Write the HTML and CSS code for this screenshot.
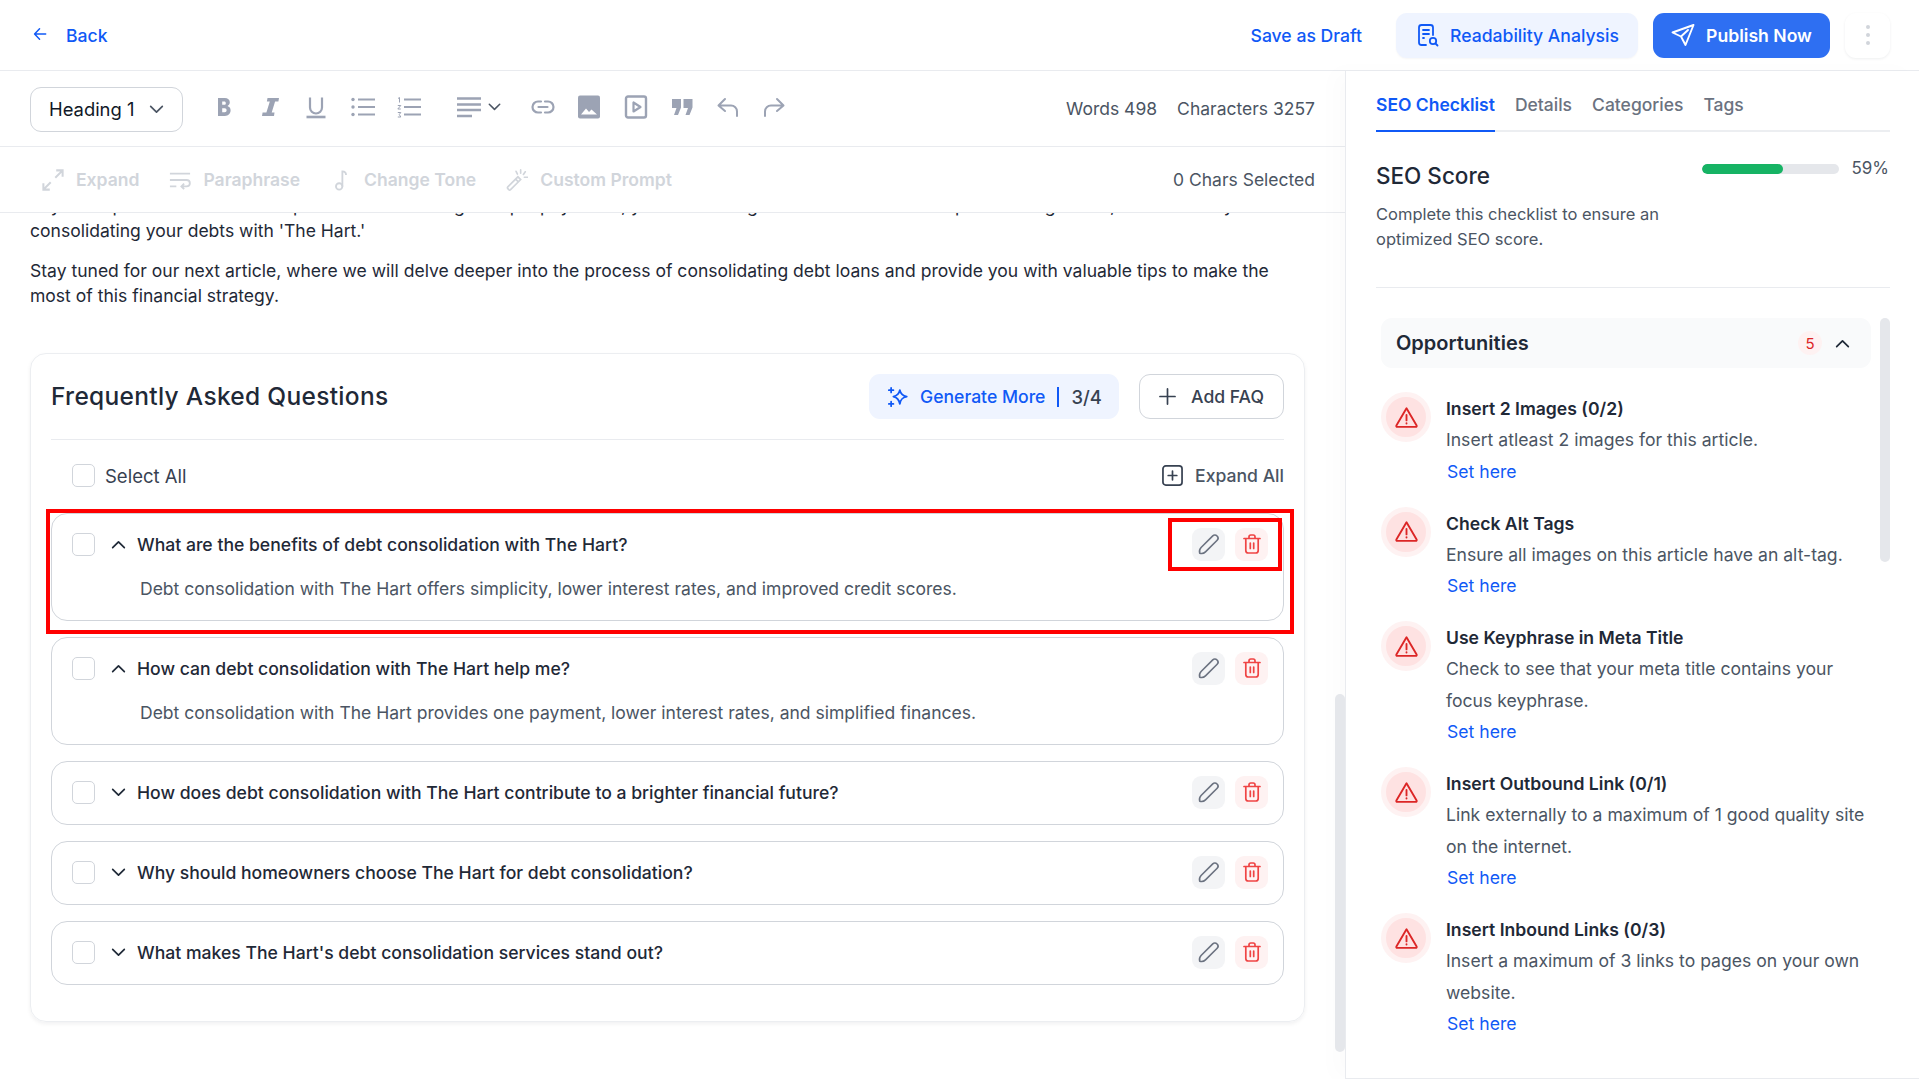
FILE: index.html
```html
<!DOCTYPE html>
<html lang="en">
<head>
<meta charset="utf-8">
<title>Editor</title>
<link rel="stylesheet" href="styles.css">
</head>
<body>
<svg class="defs" width="0" height="0" aria-hidden="true">
  <defs>
    <symbol id="i-up" viewBox="0 0 16 10"><path d="M1.5 8.5 8 2l6.5 6.5" fill="none" stroke="currentColor" stroke-width="1.9" stroke-linecap="round" stroke-linejoin="round"/></symbol>
    <symbol id="i-down" viewBox="0 0 16 10"><path d="M1.5 1.5 8 8l6.5-6.5" fill="none" stroke="currentColor" stroke-width="1.9" stroke-linecap="round" stroke-linejoin="round"/></symbol>
    <symbol id="i-edit" viewBox="0 0 24 24"><path d="M4.2 19.8c-.6-2.2-.2-3.7 1.2-5.1L15.8 4.3c1-1 2.7-1 3.8.1s1.1 2.8.1 3.8L9.3 18.6c-1.400 1.400-2.900 1.800-5.100 1.200Z" fill="none" stroke="currentColor" stroke-width="1.400" stroke-linejoin="round"/></symbol>
    <symbol id="i-trash" viewBox="0 0 24 24"><path d="M4 6.500h16M9 6.500V4.800C9 3.800 9.800 3 10.800 3h2.400c1 0 1.800.8 1.800 1.800v1.700M5.800 6.500v12c0 1.400 1.100 2.500 2.500 2.500h7.400c1.400 0 2.500-1.100 2.500-2.500v-12M10.300 11v5.500M13.700 11v5.500" fill="none" stroke="currentColor" stroke-width="1.700" stroke-linecap="round" stroke-linejoin="round"/></symbol>
    <symbol id="i-warn" viewBox="0 0 24 24"><path d="M12 3.200 2.300 19.600c-.4.700.1 1.400.8 1.400h17.800c.7 0 1.200-.7.800-1.400L12 3.200Z" fill="none" stroke="currentColor" stroke-width="1.800" stroke-linejoin="round"/><path d="M12 9.500v5.300M12 17.400v.4" fill="none" stroke="currentColor" stroke-width="1.800" stroke-linecap="round"/></symbol>
  </defs>
</svg>
<div class="app">
  <header class="topbar">
    <a class="back">
      <svg class="back-icon" viewBox="0 0 16 16"><path d="M14.500 8H2M7.500 2 1.800 8l5.700 6" fill="none" stroke="currentColor" stroke-width="1.700" stroke-linecap="round" stroke-linejoin="round"/></svg>
      <span>Back</span>
    </a>
    <div class="top-actions">
      <a class="draft">Save as Draft</a>
      <button class="btn-soft">
        <svg class="btn-icon" viewBox="0 0 24 24"><path d="M11 22H6.500A2.500 2.500 0 0 1 4 19.500v-15A2.500 2.500 0 0 1 6.500 2h9A2.500 2.500 0 0 1 18 4.500V12M8 7h6M8 11h6M8 15h1" fill="none" stroke="currentColor" stroke-width="1.800" stroke-linecap="round"/><circle cx="18" cy="18" r="3.200" fill="none" stroke="currentColor" stroke-width="1.800"/><path d="m20.500 20.500 2 2" stroke="currentColor" stroke-width="1.800" stroke-linecap="round"/></svg>
        Readability Analysis
      </button>
      <button class="btn-primary">
        <svg class="btn-icon" viewBox="0 0 24 24"><path d="M22.500 2 1.500 9.500l8.500 4 4.500 8.500L22.500 2ZM10 13.500 17 7" fill="none" stroke="currentColor" stroke-width="1.900" stroke-linecap="round" stroke-linejoin="round"/></svg>
        Publish Now
      </button>
      <button class="btn-more" aria-label="More"><i></i><i></i><i></i></button>
    </div>
  </header>

  <div class="workspace">
    <main class="editor">
      <div class="toolbar">
        <div class="format-select"><span>Heading 1</span>
          <svg class="sel-chev" viewBox="0 0 16 10"><use href="#i-down"/></svg>
        </div>
        <div class="tools">
          <svg class="tool" viewBox="0 0 24 24"><path d="M6 3h6.800c3 0 5 1.700 5 4.300 0 1.700-.9 3-2.300 3.700 1.900.6 3.100 2.200 3.100 4.300 0 3.200-2.300 5.700-5.700 5.700H6V3Zm4.200 3.600v3.200h2.100c1 0 1.500-.7 1.500-1.600s-.6-1.600-1.500-1.600h-2.100Zm0 6.700v3.900h2.500c1.200 0 1.900-.9 1.900-2s-.7-1.900-1.900-1.900h-2.500Z" fill="currentColor"/></svg>
          <svg class="tool" viewBox="0 0 24 24"><path d="M9.500 3H21l-.6 3.400h-3.300l-3.400 11.200h2.800L16 21H4l.6-3.400h3.800l3.400-11.200H8.900L9.500 3Z" fill="currentColor"/></svg>
          <svg class="tool" viewBox="0 0 24 24"><path d="M6 2.500v10a6 6 0 0 0 12 0v-10" fill="none" stroke="currentColor" stroke-width="2.200"/><path d="M2.500 22h19" stroke="currentColor" stroke-width="2.600"/></svg>
          <svg class="tool" viewBox="0 0 24 24"><path d="M7 4.500h17M7 12h17M7 19.500h17" stroke="currentColor" stroke-width="2.200"/><circle cx="2" cy="4.500" r="1.700" fill="currentColor"/><circle cx="2" cy="12" r="1.700" fill="currentColor"/><circle cx="2" cy="19.500" r="1.700" fill="currentColor"/></svg>
          <svg class="tool" viewBox="0 0 24 24"><path d="M7 4.500h17M7 12h17M7 19.500h17" stroke="currentColor" stroke-width="2.200"/><path d="M1 3.500 2.500 2.500v5M.8 10.500h3l-3 3.500h3M.8 17.500h3l-1.500 2 1.500 2.500h-3" fill="none" stroke="currentColor" stroke-width="1"/></svg>
          <div class="tool-group">
            <svg class="tool" viewBox="0 0 24 24"><path d="M0 3.500h24M0 9.500h24M0 15h24M0 21h15" stroke="currentColor" stroke-width="2.400"/></svg>
            <svg class="tool-chev" viewBox="0 0 16 10"><use href="#i-down"/></svg>
          </div>
          <svg class="tool" viewBox="0 0 24 24"><path d="M10 6.500H7a5.500 5.500 0 0 0 0 11h3M14 6.500h3a5.500 5.500 0 0 1 0 11h-3M7.500 12h9" fill="none" stroke="currentColor" stroke-width="2.200" stroke-linecap="round"/></svg>
          <svg class="tool" viewBox="0 0 24 24"><rect x="1" y="0.500" width="22" height="23" rx="2" fill="currentColor"/><path d="m4 19.500 5-6 3 3.500 2.500-2.500 5.500 5Z" fill="#fff"/></svg>
          <svg class="tool" viewBox="0 0 24 24"><rect x="2" y="1.500" width="20" height="21" rx="2" fill="none" stroke="currentColor" stroke-width="2.400"/><path d="M9.500 7.500v9l7-4.500Z" fill="none" stroke="currentColor" stroke-width="2.200" stroke-linejoin="round"/></svg>
          <svg class="tool" viewBox="0 0 24 24"><path d="M2 4h9v8.500L8 20H4l2.500-7H2V4Zm11.500 0h9v8.500l-3 7.500h-4l2.500-7h-4.500V4Z" fill="currentColor"/></svg>
          <svg class="tool" viewBox="0 0 24 24"><path d="M9 4 2.500 10.500 9 16M3 10.500h12a6 6 0 0 1 6 6V21" fill="none" stroke="currentColor" stroke-width="2" stroke-linecap="round" stroke-linejoin="round"/></svg>
          <svg class="tool" viewBox="0 0 24 24"><path d="m15 4 6.500 6.500L15 16M21 10.500H9a6 6 0 0 0-6 6V21" fill="none" stroke="currentColor" stroke-width="2" stroke-linecap="round" stroke-linejoin="round"/></svg>
        </div>
        <div class="counts"><span>Words 498</span><span>Characters 3257</span></div>
      </div>

      <div class="aibar">
        <div class="ai-tools">
          <span class="ai-tool">
            <svg class="ai-icon" viewBox="0 0 24 24"><path d="M14.500 9.500 22.500 1.500M15.500 1.500h7v7M9.500 14.500l-8 8M1.500 15.500v7h7" fill="none" stroke="currentColor" stroke-width="2.200"/></svg>Expand</span>
          <span class="ai-tool">
            <svg class="ai-icon" viewBox="0 0 24 24"><path d="M1 5h22M1 12h18c5 0 5 7 0 7h-5m2.500-3L13.500 19l3 3M1 19h7" fill="none" stroke="currentColor" stroke-width="2"/></svg>Paraphrase</span>
          <span class="ai-tool">
            <svg class="ai-icon" viewBox="0 0 24 24"><circle cx="10" cy="19" r="3.500" fill="none" stroke="currentColor" stroke-width="2"/><path d="M13.500 19V2.500c2 0 4 1 4 4" fill="none" stroke="currentColor" stroke-width="2"/></svg>Change Tone</span>
          <span class="ai-tool">
            <svg class="ai-icon" viewBox="0 0 24 24"><path d="M2 19.500 13 8.500l3 3L5 22.500a1.500 1.500 0 0 1-2 0l-1-1a1.500 1.500 0 0 1 0-2ZM10.500 11l3 3M16 1v3.500M21 3l-2 3M23.500 9H20M11 2.500l1.500 3" fill="none" stroke="currentColor" stroke-width="1.800" stroke-linecap="round"/></svg>Custom Prompt</span>
        </div>
        <span class="selected">0 Chars Selected</span>
      </div>

      <div class="doc">
        <div class="doc-scroll">
          <p class="para clip-first">Say no to pressure and the complex task of handling multiple payments, you can manage all of the debt in a simple and single loan, all made easy when<br>consolidating your debts with 'The Hart.'</p>
          <p class="para">Stay tuned for our next article, where we will delve deeper into the process of consolidating debt loans and provide you with valuable tips to make the most of this financial strategy.</p>

          <section class="faq-card">
            <div class="faq-head">
              <h2>Frequently Asked Questions</h2>
              <div class="faq-head-actions">
                <button class="btn-generate">
                  <svg class="gen-icon" viewBox="0 0 24 24"><path d="M14 4.500c.8 4 2.500 6 7.500 7-5 1-6.700 3-7.500 8-.8-5-3-7-7-8 4-1 6.200-3 7-7Z" fill="none" stroke="currentColor" stroke-width="2" stroke-linejoin="round"/><path d="M4.500 2v5M2 4.500h5M4.500 17v5M2 19.500h5" stroke="currentColor" stroke-width="1.900" stroke-linecap="round"/></svg>
                  <span>Generate More</span><i class="gen-sep"></i><b class="gen-count">3/4</b>
                </button>
                <button class="btn-outline">
                  <svg class="plus" viewBox="0 0 18 18"><path d="M9 1v16M1 9h16" stroke="currentColor" stroke-width="1.800" stroke-linecap="round"/></svg>
                  Add FAQ
                </button>
              </div>
            </div>
            <div class="select-row">
              <label class="select-all"><span class="check"></span>Select All</label>
              <a class="expand-all">
                <svg class="expand-icon" viewBox="0 0 22 22"><rect x="1" y="1" width="20" height="20" rx="3" fill="none" stroke="currentColor" stroke-width="1.800"/><path d="M11 6.500v9M6.500 11h9" stroke="currentColor" stroke-width="1.800" stroke-linecap="round"/></svg>
                Expand All
              </a>
            </div>
            <div class="faq-list">
              <article class="faq-item">
                <span class="mark mark-row"></span>
                <span class="mark mark-actions"></span>
                <div class="faq-row">
                  <span class="check"></span>
                  <svg class="chev" viewBox="0 0 16 10"><use href="#i-up"/></svg>
                  <span class="q">What are the benefits of debt consolidation with The Hart?</span>
                  <div class="row-actions">
                    <button class="act act-edit"><svg class="edit-icon" viewBox="0 0 24 24"><use href="#i-edit"/></svg></button>
                    <button class="act act-del"><svg class="act-icon" viewBox="0 0 24 24"><use href="#i-trash"/></svg></button>
                  </div>
                </div>
                <p class="answer">Debt consolidation with The Hart offers simplicity, lower interest rates, and improved credit scores.</p>
              </article>
              <article class="faq-item">
                <div class="faq-row">
                  <span class="check"></span>
                  <svg class="chev" viewBox="0 0 16 10"><use href="#i-up"/></svg>
                  <span class="q">How can debt consolidation with The Hart help me?</span>
                  <div class="row-actions">
                    <button class="act act-edit"><svg class="edit-icon" viewBox="0 0 24 24"><use href="#i-edit"/></svg></button>
                    <button class="act act-del"><svg class="act-icon" viewBox="0 0 24 24"><use href="#i-trash"/></svg></button>
                  </div>
                </div>
                <p class="answer">Debt consolidation with The Hart provides one payment, lower interest rates, and simplified finances.</p>
              </article>
              <article class="faq-item">
                <div class="faq-row">
                  <span class="check"></span>
                  <svg class="chev" viewBox="0 0 16 10"><use href="#i-down"/></svg>
                  <span class="q">How does debt consolidation with The Hart contribute to a brighter financial future?</span>
                  <div class="row-actions">
                    <button class="act act-edit"><svg class="edit-icon" viewBox="0 0 24 24"><use href="#i-edit"/></svg></button>
                    <button class="act act-del"><svg class="act-icon" viewBox="0 0 24 24"><use href="#i-trash"/></svg></button>
                  </div>
                </div>
              </article>
              <article class="faq-item">
                <div class="faq-row">
                  <span class="check"></span>
                  <svg class="chev" viewBox="0 0 16 10"><use href="#i-down"/></svg>
                  <span class="q">Why should homeowners choose The Hart for debt consolidation?</span>
                  <div class="row-actions">
                    <button class="act act-edit"><svg class="edit-icon" viewBox="0 0 24 24"><use href="#i-edit"/></svg></button>
                    <button class="act act-del"><svg class="act-icon" viewBox="0 0 24 24"><use href="#i-trash"/></svg></button>
                  </div>
                </div>
              </article>
              <article class="faq-item">
                <div class="faq-row">
                  <span class="check"></span>
                  <svg class="chev" viewBox="0 0 16 10"><use href="#i-down"/></svg>
                  <span class="q">What makes The Hart's debt consolidation services stand out?</span>
                  <div class="row-actions">
                    <button class="act act-edit"><svg class="edit-icon" viewBox="0 0 24 24"><use href="#i-edit"/></svg></button>
                    <button class="act act-del"><svg class="act-icon" viewBox="0 0 24 24"><use href="#i-trash"/></svg></button>
                  </div>
                </div>
              </article>
            </div>
          </section>
        </div>
        <div class="doc-thumb"></div>
      </div>
    </main>

    <aside class="sidebar">
      <nav class="tabs">
        <a class="tab tab-active">SEO Checklist</a>
        <a class="tab">Details</a>
        <a class="tab">Categories</a>
        <a class="tab">Tags</a>
      </nav>
      <section class="score">
        <div class="score-text">
          <h3>SEO Score</h3>
          <p>Complete this checklist to ensure an optimized SEO score.</p>
        </div>
        <div class="score-meter">
          <div class="meter"><div class="meter-fill"></div></div>
          <span class="meter-val">59%</span>
        </div>
      </section>
      <div class="checklist">
        <div class="opp-head">
          <h4>Opportunities</h4>
          <span class="opp-badge">5</span>
          <svg class="opp-chev" viewBox="0 0 16 10"><use href="#i-up"/></svg>
        </div>
        <div class="opp-item">
          <span class="warn"><svg class="warn-icon" viewBox="0 0 24 24"><use href="#i-warn"/></svg></span>
          <div class="opp-body"><h5>Insert 2 Images (0/2)</h5><p>Insert atleast 2 images for this article.</p><a>Set here</a></div>
        </div>
        <div class="opp-item">
          <span class="warn"><svg class="warn-icon" viewBox="0 0 24 24"><use href="#i-warn"/></svg></span>
          <div class="opp-body"><h5>Check Alt Tags</h5><p>Ensure all images on this article have an alt-tag.</p><a>Set here</a></div>
        </div>
        <div class="opp-item">
          <span class="warn"><svg class="warn-icon" viewBox="0 0 24 24"><use href="#i-warn"/></svg></span>
          <div class="opp-body"><h5>Use Keyphrase in Meta Title</h5><p>Check to see that your meta title contains your focus keyphrase.</p><a>Set here</a></div>
        </div>
        <div class="opp-item">
          <span class="warn"><svg class="warn-icon" viewBox="0 0 24 24"><use href="#i-warn"/></svg></span>
          <div class="opp-body"><h5>Insert Outbound Link (0/1)</h5><p>Link externally to a maximum of 1 good quality site on the internet.</p><a>Set here</a></div>
        </div>
        <div class="opp-item">
          <span class="warn"><svg class="warn-icon" viewBox="0 0 24 24"><use href="#i-warn"/></svg></span>
          <div class="opp-body"><h5>Insert Inbound Links (0/3)</h5><p>Insert a maximum of 3 links to pages on your own website.</p><a>Set here</a></div>
        </div>
        <div class="side-thumb"></div>
      </div>
    </aside>
  </div>
</div>
</body>
</html>
```

FILE: styles.css
```css
* { box-sizing: border-box; }
html, body { margin: 0; height: 100%; }
body { font-family: Inter, "Liberation Sans", sans-serif; color: #111827; background: #fff; overflow: hidden; }
button { font: inherit; border: 0; cursor: pointer; }
h2, h3, h4, h5, p { margin: 0; }
.defs { position: absolute; }

.app { height: 1079px; display: flex; flex-direction: column; overflow: hidden; }

/* top bar */
.topbar { height: 71px; flex: none; display: flex; align-items: center; justify-content: space-between; padding: 0 29px 0 33px; border-bottom: 1px solid #e9ebef; }
.back { display: flex; align-items: center; gap: 19px; color: #1059f6; font-size: 17.600px; font-weight: 500; padding-top: 1px; }
.back-icon { width: 14px; height: 14px; margin-top: -3px; }
.top-actions { display: flex; align-items: center; }
.draft { color: #1059f6; font-size: 17.600px; font-weight: 500; margin-right: 34px; padding-top: 1px; }
.btn-soft, .btn-primary { height: 45px; display: flex; align-items: center; justify-content: center; gap: 11px; border-radius: 11px; font-size: 17.600px; font-weight: 500; }
.btn-soft { width: 242px; background: #eff4ff; color: #1059f6; margin-right: 15px; box-shadow: 0 1px 2px rgba(16,24,40,.04); }
.btn-primary { width: 177px; background: #2e6ff2; color: #fff; font-weight: 600; margin-right: 15px; }
.btn-icon { width: 24px; height: 24px; }
.btn-more { width: 45px; height: 45px; border-radius: 11px; background: #fff; box-shadow: 0 1px 3px rgba(16,24,40,.07); display: flex; flex-direction: column; align-items: center; justify-content: center; gap: 4px; }
.btn-more i { width: 4px; height: 4px; border-radius: 50%; background: #d1d5db; }

.workspace { flex: 1; display: flex; min-height: 0; }

/* editor */
.editor { width: 1345px; flex: none; display: flex; flex-direction: column; min-height: 0; }
.toolbar { height: 76px; flex: none; display: flex; align-items: center; padding: 0 30px; border-bottom: 1px solid #e9ebef; }
.format-select { width: 153px; height: 45px; margin-top: 1px; flex: none; border: 1px solid #d1d5db; border-radius: 11px; display: flex; align-items: center; justify-content: space-between; padding: 0 18px; font-size: 18.400px; }
.sel-chev { width: 15px; height: 9px; color: #4b5563; }
.tools { display: flex; align-items: center; gap: 22.200px; margin-left: 29px; margin-top: -4px; }
.tool { width: 24px; height: 24px; color: #9ca3b4; flex: none; }
.tool-group { display: flex; align-items: center; gap: 7px; margin: 0 8px 0 14px; }
.tool-chev { width: 13px; height: 8px; color: #4b5563; }
.counts { margin-left: auto; display: flex; gap: 20px; font-size: 17.500px; color: #4b5563; white-space: nowrap; }

.aibar { height: 66px; flex: none; display: flex; align-items: center; justify-content: space-between; padding: 0 30px 0 42px; border-bottom: 1px solid #e9ebef; }
.ai-tools { display: flex; gap: 30px; }
.ai-tool { display: flex; align-items: center; gap: 12px; font-size: 17.550px; font-weight: 600; color: #d1d5db; }
.ai-icon { width: 22px; height: 22px; }
.selected { font-size: 17.500px; color: #4b5563; }

.doc { flex: 1; min-height: 0; position: relative; overflow: hidden; }
.doc-scroll { padding: 0 40px 0 30px; }
.para { font-size: 17.550px; line-height: 25px; color: #1f2937; margin-bottom: 15px; }
.clip-first { margin-top: -20px; white-space: nowrap; }
.doc-thumb { position: absolute; right: 0; top: 481px; width: 10px; height: 358px; border-radius: 5px; background: #e5e7eb; }

.faq-card { margin-top: 45px; height: 669px; border: 1px solid #eceef1; border-radius: 16px; padding: 20px 20px 0; box-shadow: 0 2px 4px rgba(16,24,40,.06); }
.faq-head { display: flex; align-items: center; justify-content: space-between; padding-bottom: 20px; border-bottom: 1px solid #e9ebef; }
.faq-head h2 { font-size: 24.500px; font-weight: 500; color: #1f2937; letter-spacing: .3px; margin-top: -2px; }
.faq-head-actions { display: flex; gap: 20px; }
.btn-generate { width: 250px; height: 45px; display: flex; align-items: center; padding-left: 18px; border-radius: 11px; background: #eff4ff; color: #1059f6; font-size: 17.600px; font-weight: 500; }
.gen-icon { width: 22px; height: 22px; margin-right: 11px; }
.gen-sep { width: 2px; height: 20px; background: #1059f6; margin: 0 12px; }
.gen-count { color: #374151; font-weight: 500; font-size: 18.400px; }
.btn-outline { width: 145px; height: 45px; display: flex; align-items: center; justify-content: center; gap: 15px; background: #fff; border: 1px solid #d1d5db; border-radius: 11px; color: #374151; font-size: 17.600px; font-weight: 500; }
.plus { width: 17px; height: 17px; }

.select-row { height: 73px; display: flex; align-items: center; justify-content: space-between; padding: 0 0 2px 21px; }
.select-all { display: flex; align-items: center; gap: 10px; font-size: 18.500px; color: #374151; }
.check { width: 23px; height: 23px; flex: none; display: block; border: 1px solid #d1d5db; border-radius: 5px; background: #fff; }
.expand-all { display: flex; align-items: center; gap: 12px; font-size: 17.600px; font-weight: 500; color: #4b5563; }
.expand-icon { width: 21px; height: 21px; color: #374151; }

.faq-list { display: flex; flex-direction: column; gap: 16px; }
.faq-item { position: relative; border: 1px solid #d1d5db; border-radius: 16px; }
.faq-row { height: 62px; display: flex; align-items: center; padding: 0 15px 2px 20px; }
.chev { width: 15px; height: 9px; margin: 0 11px 0 16px; color: #1f2937; flex: none; }
.q { flex: 1; font-size: 17.600px; font-weight: 500; color: #1f2937; }
.row-actions { display: flex; gap: 10px; }
.act { width: 33px; height: 33px; padding: 0; border-radius: 9px; display: flex; align-items: center; justify-content: center; }
.act-edit { background: #f3f4f6; color: #6b7280; }
.act-del { background: #fef2f2; color: #ef4444; }
.act-icon { width: 24px; height: 24px; }
.edit-icon { width: 27px; height: 27px; flex: none; }
.answer { font-size: 17.550px; line-height: 25px; color: #4b5563; padding: 0 0 19px 88px; }

.mark { position: absolute; border: 4px solid #f00; pointer-events: none; z-index: 2; }
.mark-row { left: -6px; right: -11px; top: -5px; bottom: -14px; }
.mark-actions { right: 1px; top: 4px; width: 114px; height: 53px; }

/* sidebar */
.sidebar { width: 574px; flex: none; border-left: 1px solid #e9ebef; border-bottom: 1px solid #e9ebef; padding: 0 29px 0 30px; display: flex; flex-direction: column; min-height: 0; overflow: hidden; box-shadow: -12px 0 20px rgba(16,24,40,.015); }
.tabs { height: 61px; flex: none; display: flex; gap: 20px; border-bottom: 2px solid #eceef1; }
.tab { height: 61px; padding-top: 23px; font-size: 17.500px; color: #6b7280; font-weight: 500; }
.tab-active { color: #1059f6; font-weight: 600; border-bottom: 2px solid #1059f6; }
.score { height: 156px; flex: none; display: flex; justify-content: space-between; border-bottom: 1px solid #e9ebef; padding-top: 30px; }
.score-text { width: 320px; }
.score-text h3 { font-size: 22.500px; font-weight: 500; color: #1f2937; line-height: 27px; }
.score-text p { margin-top: 13px; font-size: 16.500px; line-height: 25px; color: #4b5563; }
.score-meter { display: flex; gap: 12px; align-items: flex-start; margin-top: -6px; margin-right: 1px; }
.meter { width: 137px; height: 10px; margin-top: 8px; border-radius: 5px; background: #e5e7eb; overflow: hidden; }
.meter-fill { width: 59%; height: 100%; border-radius: 5px; background: #16b364; }
.meter-val { font-size: 17px; line-height: 25px; color: #4b5563; }

.checklist { position: relative; flex: 1; min-height: 0; padding: 30px 19px 0 5px; }
.opp-head { height: 50px; display: flex; align-items: center; padding: 0 21px 0 15px; margin-bottom: 24px; border-radius: 11px; background: #f9fafb; }
.opp-head h4 { flex: 1; font-size: 20px; font-weight: 600; color: #1f2937; }
.opp-badge { width: 24px; height: 24px; border-radius: 50%; background: #fef2f2; color: #dc2626; font-size: 15px; display: flex; align-items: center; justify-content: center; margin-right: 13px; }
.opp-chev { width: 15px; height: 9px; color: #1f2937; margin-top: 1px; }
.opp-item { display: flex; gap: 15px; padding-bottom: 20px; }
.warn { width: 50px; height: 50px; flex: none; border-radius: 50%; background: #fee2e2; border: 5px solid #fef2f2; display: flex; align-items: center; justify-content: center; color: #dc2626; }
.warn-icon { width: 25px; height: 25px; }
.opp-body { padding-top: 5px; }
.opp-body h5 { font-size: 17.600px; line-height: 24px; font-weight: 600; color: #1f2937; }
.opp-body p { margin-top: 3px; font-size: 17.600px; line-height: 31.500px; color: #4b5563; }
.opp-body a { display: block; margin-left: 1px; font-size: 17.600px; line-height: 31px; color: #1059f6; }
.side-thumb { position: absolute; right: 0; top: 30px; width: 10px; height: 244px; border-radius: 5px; background: #e5e7eb; }
```
